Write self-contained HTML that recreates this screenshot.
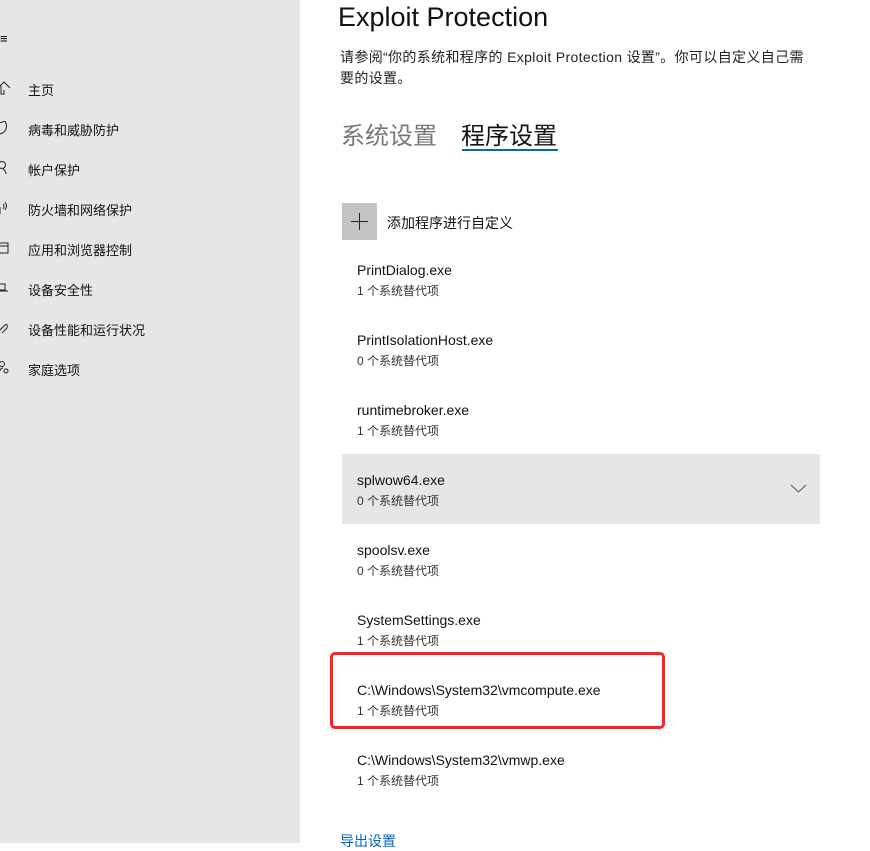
<!DOCTYPE html>
<html><head><meta charset="utf-8"><style>
*{margin:0;padding:0;box-sizing:border-box}
body{width:870px;height:843px;overflow:hidden;background:#fff;position:relative;font-family:"Liberation Sans","Noto Sans CJK SC",sans-serif;color:#000}
.side{position:absolute;left:0;top:0;width:300px;height:843px;background:#e6e6e6}
.nav{position:absolute;left:28px;font-size:13px;color:#111}
.ic{position:absolute;left:0;width:12px;height:14px}
.t{position:absolute;white-space:nowrap}
.nm{position:absolute;left:357px;font-size:14px;color:#111;white-space:nowrap}
.sb{position:absolute;left:357px;font-size:12px;color:#333;white-space:nowrap}
</style></head><body>
<div class="side">
 <div class="t" style="left:0;top:31px;font-size:13px">≡</div>
 <svg class="ic" style="top:81px" viewBox="0 0 12 14"><path d="M-2 7 L4 1 L10 7 M1 5 V13 H4 V9" fill="none" stroke="#222" stroke-width="1"/></svg>
 <svg class="ic" style="top:121px" viewBox="0 0 12 14"><path d="M-1 2 Q3 1 5 0 Q8 5 5 10 Q2 13 -1 13" fill="none" stroke="#222"/></svg>
 <svg class="ic" style="top:161px" viewBox="0 0 12 14"><circle cx="2" cy="4" r="3.5" fill="none" stroke="#222"/><path d="M3 8 Q6 10 6 13" fill="none" stroke="#222"/></svg>
 <svg class="ic" style="top:201px" viewBox="0 0 12 14"><path d="M0 6 V13 M3 3 Q5 5 3 8 M5 1 Q8 5 5 9" fill="none" stroke="#222"/></svg>
 <svg class="ic" style="top:241px" viewBox="0 0 12 14"><path d="M-1 2 H8 V12 H-1 M-1 5 H8" fill="none" stroke="#222"/></svg>
 <svg class="ic" style="top:281px" viewBox="0 0 12 14"><path d="M-1 3 H5 V9 H-1 M-1 10 H8" fill="none" stroke="#222"/></svg>
 <svg class="ic" style="top:321px" viewBox="0 0 12 14"><path d="M-1 10 L5 4 Q8 2 7 7 L2 12" fill="none" stroke="#222"/></svg>
 <svg class="ic" style="top:361px" viewBox="0 0 12 14"><circle cx="2" cy="3" r="2.5" fill="none" stroke="#222"/><circle cx="6" cy="10" r="2" fill="none" stroke="#222"/><path d="M-1 13 Q0 7 3 7" fill="none" stroke="#222"/></svg>
 <div class="nav" style="top:80px">主页</div>
 <div class="nav" style="top:120px">病毒和威胁防护</div>
 <div class="nav" style="top:160px">帐户保护</div>
 <div class="nav" style="top:200px">防火墙和网络保护</div>
 <div class="nav" style="top:240px">应用和浏览器控制</div>
 <div class="nav" style="top:280px">设备安全性</div>
 <div class="nav" style="top:320px">设备性能和运行状况</div>
 <div class="nav" style="top:360px">家庭选项</div>
</div>
<div class="t" style="left:338px;top:2px;font-size:27px;color:#111">Exploit Protection</div>
<div class="t" style="left:340px;top:47px;font-size:14px;line-height:21px;letter-spacing:0.35px;color:#222">请参阅“你的系统和程序的 Exploit Protection 设置”。你可以自定义自己需<br>要的设置。</div>
<div class="t" style="left:341px;top:116px;font-size:24px;color:#777">系统设置</div>
<div class="t" style="left:461px;top:116px;font-size:24px;color:#111">程序设置</div>
<div style="position:absolute;left:462px;top:149px;width:96px;height:2px;background:#0067c0"></div>
<div style="position:absolute;left:342px;top:203px;width:35px;height:37px;background:#c4c4c4"></div>
<svg style="position:absolute;left:351px;top:213px" width="17" height="17"><path d="M8.5 0 V17 M0 8.5 H17" stroke="#222" stroke-width="1"/></svg>
<div class="t" style="left:387px;top:213px;font-size:14px;color:#111">添加程序进行自定义</div>
<div style="position:absolute;left:342px;top:454px;width:478px;height:70px;background:#e6e6e6"></div>
<svg style="position:absolute;left:790px;top:483px" width="17" height="11"><path d="M1 2 L8.5 9 L16 2" fill="none" stroke="#555" stroke-width="1"/></svg>
<div class="nm" style="top:262px">PrintDialog.exe</div><div class="sb" style="top:282px">1 个系统替代项</div>
<div class="nm" style="top:332px">PrintIsolationHost.exe</div><div class="sb" style="top:352px">0 个系统替代项</div>
<div class="nm" style="top:402px">runtimebroker.exe</div><div class="sb" style="top:422px">1 个系统替代项</div>
<div class="nm" style="top:472px">splwow64.exe</div><div class="sb" style="top:492px">0 个系统替代项</div>
<div class="nm" style="top:542px">spoolsv.exe</div><div class="sb" style="top:562px">0 个系统替代项</div>
<div class="nm" style="top:612px">SystemSettings.exe</div><div class="sb" style="top:632px">1 个系统替代项</div>
<div class="nm" style="top:682px">C:\Windows\System32\vmcompute.exe</div><div class="sb" style="top:702px">1 个系统替代项</div>
<div class="nm" style="top:752px">C:\Windows\System32\vmwp.exe</div><div class="sb" style="top:772px">1 个系统替代项</div>
<div style="position:absolute;left:330px;top:652px;width:335px;height:77px;border:3px solid #f22;border-radius:5px"></div>
<div class="t" style="left:340px;top:831px;font-size:14px;color:#0067c0">导出设置</div>
</body></html>
